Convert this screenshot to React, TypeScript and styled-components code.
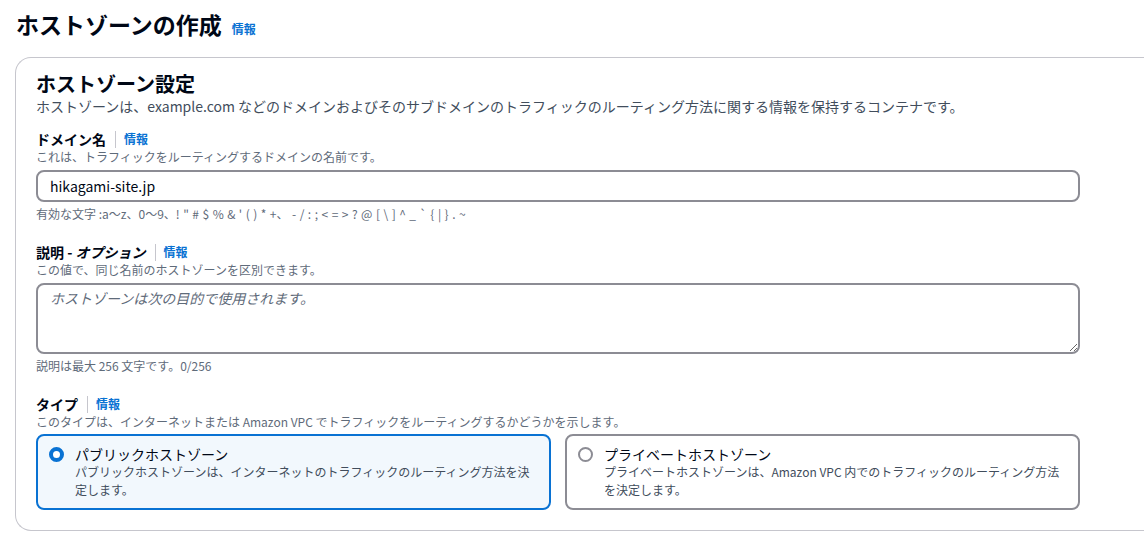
import * as React from 'react';
import styled, { createGlobalStyle } from "styled-components";

const GlobalStyle = createGlobalStyle`
    html, body {
        margin: 0;
        background: #ffffff;
        overflow: hidden;
    }

    body {
        font-family: "Noto Sans CJK JP", "Noto Sans", sans-serif;
        color: #000716;
        -webkit-font-smoothing: antialiased;
    }
`

const Page = styled.div`
    padding: 9px 0 0 15px;
`

const Header = styled.div`
    display: flex;
    align-items: baseline;
    gap: 10px;
    padding-left: 1px;

    h1 {
        margin: 0;
        font-size: 23px;
        line-height: 30px;
        font-weight: 700;
        color: #000716;
    }
`

const InfoLink = styled.a`
    font-size: 12px;
    line-height: 16px;
    font-weight: 700;
    color: #0972d3;
    text-decoration: none;
    cursor: pointer;
`

/* the panel runs on past the right edge of the window, so only its left side is drawn */
const Container = styled.section`
    margin-top: 18px;
    border: 1px solid #c6c6cd;
    border-right: none;
    border-radius: 16px 0 0 16px;
    padding: 14px 0 20px 20px;

    .content {
        width: 1044px;
    }

    h2 {
        margin: 0;
        font-size: 20px;
        line-height: 24px;
        font-weight: 700;
    }

    .intro {
        font-size: 14px;
        line-height: 20px;
        color: #414d5c;
    }
`

const Field = styled.div<{ $first?: boolean }>`
    margin-top: ${(p) => (p.$first ? "13px" : "20px")};

    .label-row {
        display: flex;
        align-items: center;
        height: 20px;
    }

    .label {
        font-size: 14px;
        line-height: 20px;
        font-weight: 700;

        em {
            font-style: italic;
        }
    }

    .divider {
        width: 1px;
        height: 17px;
        background-color: #c6c6cd;
        margin: 0 8px 0 9px;
    }

    .description,
    .constraint {
        font-size: 12px;
        line-height: 16px;
        color: #5f6b7a;
    }

    .constraint {
        margin-top: 4px;
    }

    .symbols {
        word-spacing: 0.8px;
    }
`

const TextInput = styled.input`
    display: block;
    box-sizing: border-box;
    width: 100%;
    height: 32px;
    margin-top: 5px;
    padding: 4px 12px;
    border: 2px solid #8c8c94;
    border-radius: 8px;
    font-family: inherit;
    font-size: 14px;
    line-height: 20px;
    color: #000716;
    outline: none;
    background: #ffffff;
`

const TextArea = styled.textarea`
    display: block;
    box-sizing: border-box;
    width: 100%;
    height: 71px;
    margin-top: 5px;
    padding: 3px 12px;
    border: 2px solid #8c8c94;
    border-radius: 8px;
    font-family: inherit;
    font-size: 14px;
    line-height: 20px;
    color: #000716;
    outline: none;

    &::placeholder {
        color: #5f6b7a;
        font-style: italic;
    }
`

const TileGrid = styled.div`
    display: grid;
    grid-template-columns: 1fr 1fr;
    gap: 14px;
    margin-top: 4px;
`

const Tile = styled.label<{ $checked?: boolean }>`
    display: flex;
    gap: 11px;
    box-sizing: border-box;
    height: 76px;
    padding: 9px 12px 9px 11px;
    border: 2px solid ${(p) => (p.$checked ? "#0972d3" : "#8c8c94")};
    border-radius: 8px;
    background-color: ${(p) => (p.$checked ? "#f2f8fd" : "#ffffff")};
    cursor: pointer;

    .title {
        font-size: 14px;
        line-height: 18px;
        color: #000716;
    }

    .text {
        font-size: 12px;
        line-height: 18px;
        color: #414d5c;
    }
`

const RadioDot = styled.span<{ $checked?: boolean }>`
    flex: none;
    box-sizing: border-box;
    width: 15px;
    height: 15px;
    margin-top: 2px;
    border-radius: 50%;
    border: ${(p) => (p.$checked ? "4px solid #0972d3" : "2px solid #8c8c94")};
    background: #ffffff;
`

function FieldLabel({ children }: { children: React.ReactNode }) {
    return (
        <div className="label-row">
            <span className="label">{children}</span>
            <span className="divider" />
            <InfoLink>情報</InfoLink>
        </div>
    )
}

function HostedZoneTile({ title, text, checked }: { title: string, text: string, checked?: boolean }) {
    return (
        <Tile $checked={checked}>
            <RadioDot $checked={checked} />
            <div>
                <div className="title">{title}</div>
                <div className="text">{text}</div>
            </div>
        </Tile>
    )
}

export default function App() {
    const [domain, setDomain] = React.useState("hikagami-site.jp")
    const [note, setNote] = React.useState("")

    return (
        <Page>
            <GlobalStyle />
            <Header>
                <h1>ホストゾーンの作成</h1>
                <InfoLink>情報</InfoLink>
            </Header>

            <Container>
                <div className="content">
                    <h2>ホストゾーン設定</h2>
                    <div className="intro">
                        ホストゾーンは、example.com などのドメインおよびそのサブドメインのトラフィックのルーティング方法に関する情報を保持するコンテナです。
                    </div>

                    <Field $first>
                        <FieldLabel>ドメイン名</FieldLabel>
                        <div className="description">これは、トラフィックをルーティングするドメインの名前です。</div>
                        <TextInput value={domain} onChange={(e) => setDomain(e.target.value)} />
                        <div className="constraint">
                            有効な文字 :a〜z、0〜9、<span className="symbols">! " # $ % &amp; ' ( ) * +、 - / : ; &lt; = &gt; ? @ [ \ ] ^ _ ` {"{"} | {"}"} . ~</span>
                        </div>
                    </Field>

                    <Field>
                        <FieldLabel>説明 - <em>オプション</em></FieldLabel>
                        <div className="description">この値で、同じ名前のホストゾーンを区別できます。</div>
                        <TextArea
                            value={note}
                            onChange={(e) => setNote(e.target.value)}
                            placeholder="ホストゾーンは次の目的で使用されます。" />
                        <div className="constraint">説明は最大 256 文字です。{note.length}/256</div>
                    </Field>

                    <Field>
                        <FieldLabel>タイプ</FieldLabel>
                        <div className="description">このタイプは、インターネットまたは Amazon VPC でトラフィックをルーティングするかどうかを示します。</div>
                        <TileGrid>
                            <HostedZoneTile
                                checked
                                title="パブリックホストゾーン"
                                text="パブリックホストゾーンは、インターネットのトラフィックのルーティング方法を決定します。" />
                            <HostedZoneTile
                                title="プライベートホストゾーン"
                                text="プライベートホストゾーンは、Amazon VPC 内でのトラフィックのルーティング方法を決定します。" />
                        </TileGrid>
                    </Field>
                </div>
            </Container>
        </Page>
    )
}
